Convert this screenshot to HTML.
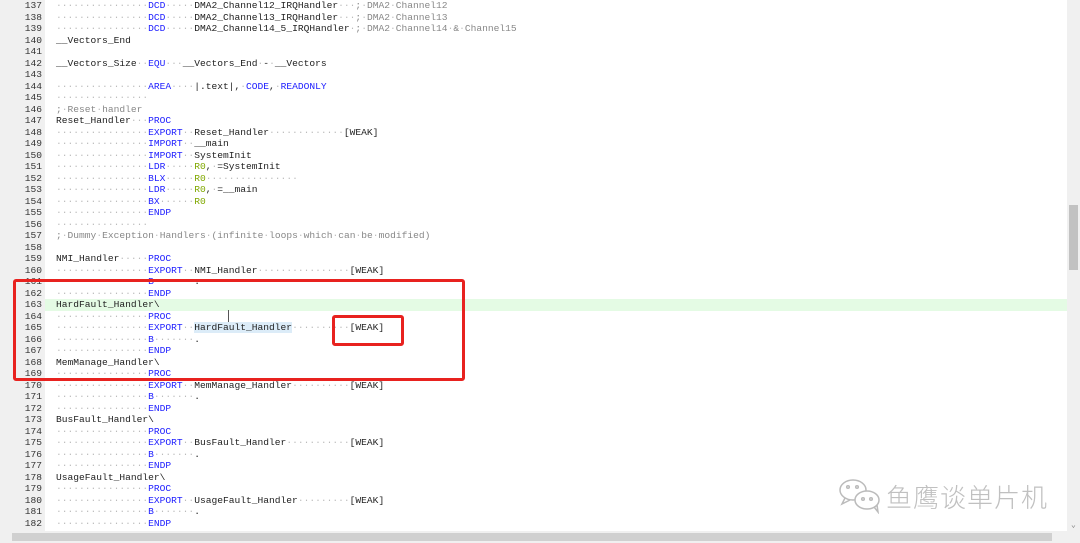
<!DOCTYPE html>
<html><head><meta charset="utf-8"><style>
body{margin:0;width:1080px;height:543px;overflow:hidden;background:#fff;position:relative;font-family:"Liberation Mono",monospace;}
#gut{position:absolute;left:0;top:0;width:45px;height:531px;background:#f0f0f0;}
.ln{position:absolute;left:0;width:1067px;height:11.5px;line-height:11.5px;font-size:9.6px;white-space:pre;}
.n{position:absolute;left:0;width:42px;text-align:right;color:#333;}
.t{position:absolute;left:56px;color:#222;}
.d{color:#bbb}.k{color:#2020ff}.g{color:#80a800}.c{color:#888}
.hl{background:#e4fbe4;left:45px!important;width:1022px}
.sel{background:#dcecf8}
.box{position:absolute;border:3px solid #e8221f;border-radius:3px;}
</style></head><body>
<div id="gut"></div>
<div class="ln hl" style="top:299px"></div>
<div id="code"></div>
<div class="box" style="left:13px;top:279px;width:446px;height:96px"></div>
<div class="box" style="left:332px;top:315px;width:66px;height:25px"></div>
<div style="position:absolute;left:228px;top:310px;width:1px;height:12px;background:#555"></div>
<svg style="position:absolute;left:838px;top:478px" width="46" height="36" viewBox="0 0 46 36" fill="none" stroke="#bbb" stroke-width="1.5"><ellipse cx="15" cy="12" rx="13" ry="10"/><path d="M7 20 l-3 6 l8-4"/><ellipse cx="29" cy="22" rx="12" ry="9" fill="#fff"/><path d="M36 29 l4 5 l-1-7"/><circle cx="10" cy="9" r="1.3"/><circle cx="19" cy="9" r="1.3"/><circle cx="25" cy="21" r="1.3"/><circle cx="33" cy="21" r="1.3"/></svg>
<div style="position:absolute;left:886px;top:478px;font-family:'Noto Sans CJK SC',sans-serif;font-size:26px;font-weight:300;color:#c0c0c0;letter-spacing:1px">鱼鹰谈单片机</div>
<div style="position:absolute;left:1067px;top:0;width:13px;height:531px;background:#f0f0f0"></div>
<div style="position:absolute;left:1069px;top:205px;width:9px;height:65px;background:#c2c2c2"></div>
<div style="position:absolute;left:1071px;top:520px;font-size:8px;color:#777">⌄</div>
<div style="position:absolute;left:0;top:531px;width:1080px;height:12px;background:#f0f0f0"></div>
<div style="position:absolute;left:12px;top:533px;width:1040px;height:8px;background:#d0d0d0"></div>
<script>
const D='················';
const L={
137:`${D}<k>DCD</k>·····DMA2_Channel12_IRQHandler···<c>;·DMA2·Channel12</c>`,
138:`${D}<k>DCD</k>·····DMA2_Channel13_IRQHandler···<c>;·DMA2·Channel13</c>`,
139:`${D}<k>DCD</k>·····DMA2_Channel14_5_IRQHandler·<c>;·DMA2·Channel14·&·Channel15</c>`,
140:`__Vectors_End`,141:``,
142:`__Vectors_Size··<k>EQU</k>···__Vectors_End·-·__Vectors`,143:``,
144:`${D}<k>AREA</k>····|.text|,·<k>CODE</k>,·<k>READONLY</k>`,145:D,
146:`<c>;·Reset·handler</c>`,147:`Reset_Handler···<k>PROC</k>`,
148:`${D}<k>EXPORT</k>··Reset_Handler·············[WEAK]`,
149:`${D}<k>IMPORT</k>··__main`,150:`${D}<k>IMPORT</k>··SystemInit`,
151:`${D}<k>LDR</k>·····<g>R0</g>,·=SystemInit`,152:`${D}<k>BLX</k>·····<g>R0</g>················`,
153:`${D}<k>LDR</k>·····<g>R0</g>,·=__main`,154:`${D}<k>BX</k>······<g>R0</g>`,155:`${D}<k>ENDP</k>`,156:D,
157:`<c>;·Dummy·Exception·Handlers·(infinite·loops·which·can·be·modified)</c>`,158:``,
159:`NMI_Handler·····<k>PROC</k>`,160:`${D}<k>EXPORT</k>··NMI_Handler················[WEAK]`,
161:`${D}<k>B</k>·······.`,162:`${D}<k>ENDP</k>`,163:`HardFault_Handler\\`,164:`${D}<k>PROC</k>`,
165:`${D}<k>EXPORT</k>··<s>HardFault_Handler</s>··········[WEAK]`,166:`${D}<k>B</k>·······.`,167:`${D}<k>ENDP</k>`,
168:`MemManage_Handler\\`,169:`${D}<k>PROC</k>`,170:`${D}<k>EXPORT</k>··MemManage_Handler··········[WEAK]`,
171:`${D}<k>B</k>·······.`,172:`${D}<k>ENDP</k>`,173:`BusFault_Handler\\`,174:`${D}<k>PROC</k>`,
175:`${D}<k>EXPORT</k>··BusFault_Handler···········[WEAK]`,176:`${D}<k>B</k>·······.`,177:`${D}<k>ENDP</k>`,
178:`UsageFault_Handler\\`,179:`${D}<k>PROC</k>`,180:`${D}<k>EXPORT</k>··UsageFault_Handler·········[WEAK]`,
181:`${D}<k>B</k>·······.`,182:`${D}<k>ENDP</k>`};
let h='';
for(let i=137;i<=182;i++){
 let s=L[i].replace(/<(k|c|g)>(.*?)<\/\1>/g,(m,a,b)=>`\u0001${a}\u0002${b}\u0003`).replace(/<s>(.*?)<\/s>/,'\u0004$1\u0005');
 s=s.replace(/·+/g,m=>`<span class="d">${m}</span>`);
 s=s.replace(/\u0001(\w)\u0002/g,'<span class="$1">').replace(/\u0003/g,'</span>').replace('\u0004','<span class="sel">').replace('\u0005','</span>');
 h+=`<div class="ln" style="top:${(i-137)*11.5}px"><span class="n">${i}</span><span class="t">${s}</span></div>`;
}
document.getElementById('code').innerHTML=h;
</script>
</body></html>
